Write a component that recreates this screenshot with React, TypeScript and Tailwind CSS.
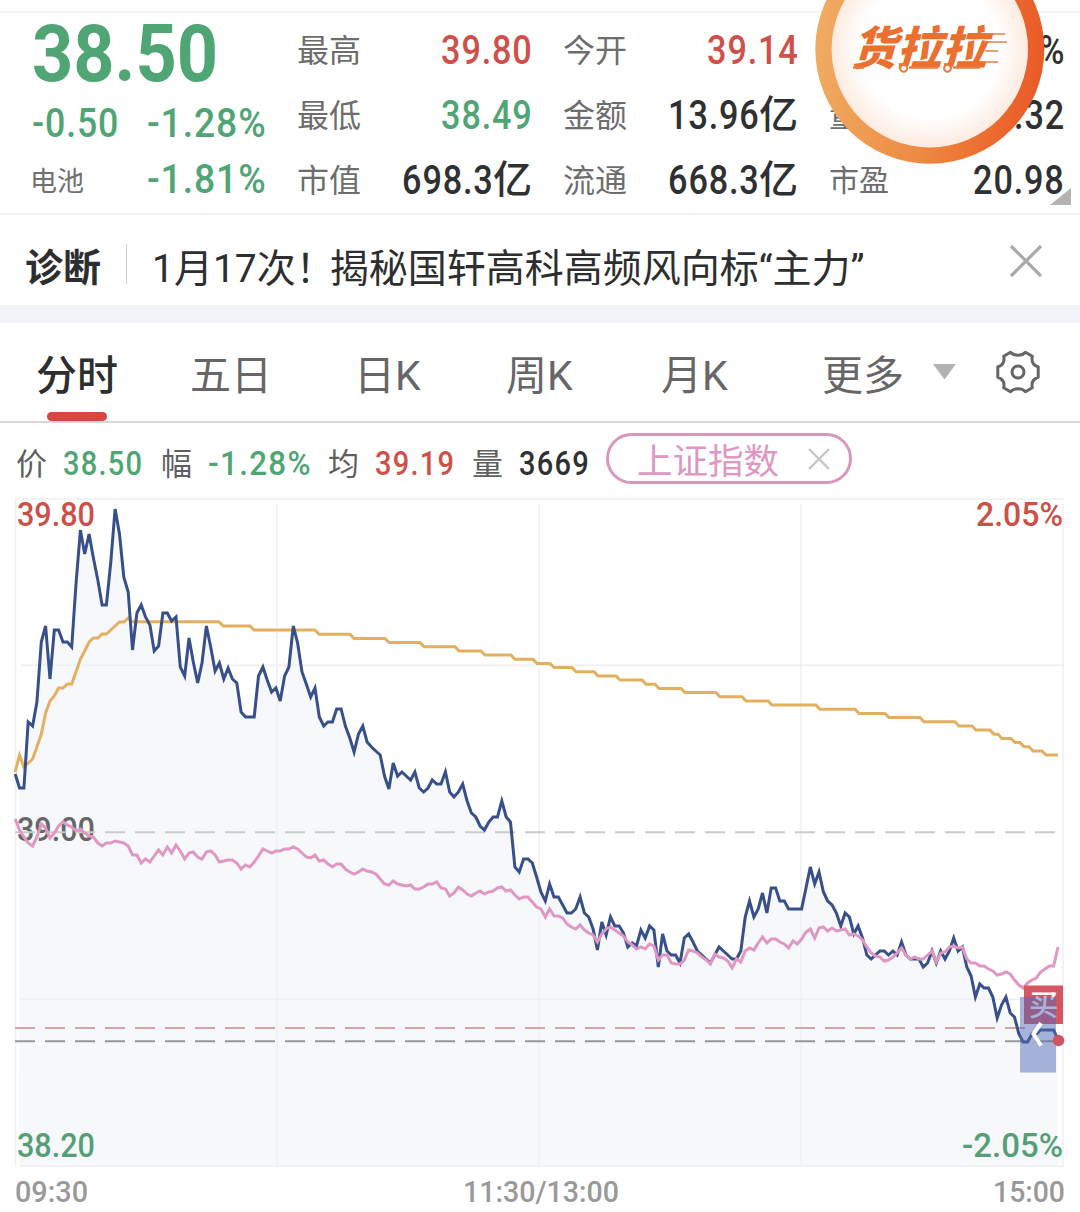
import React from 'react';
import clsx from 'clsx';

const UP = 'text-[#cf5048]';
const DOWN = 'text-[#4fa573]';
const INK = 'text-[#2f3032]';

const QUOTE_COLUMNS = [
  [
    { label: '最高', value: '39.80', tone: UP },
    { label: '最低', value: '38.49', tone: DOWN },
    { label: '市值', value: '698.3', unit: '亿', tone: INK },
  ],
  [
    { label: '今开', value: '39.14', tone: UP },
    { label: '金额', value: '13.96', unit: '亿', tone: INK },
    { label: '流通', value: '668.3', unit: '亿', tone: INK },
  ],
  [
    { label: '', value: '%', tone: INK },
    { label: '量比', value: '.32', tone: INK },
    { label: '市盈', value: '20.98', tone: INK, small: true },
  ],
];

const TABS = [
  { label: '分时', width: 'w-[154px]', active: true },
  { label: '五日', width: 'w-[164px]' },
  { label: '日K', width: 'w-[152px]' },
  { label: '周K', width: 'w-[155px]' },
  { label: '月K', width: 'w-[161px]' },
];

const SUMMARY = [
  { label: '价', value: '38.50', width: 'w-[145px]', scale: 'scale-x-[.88]', tone: DOWN },
  { label: '幅', value: '-1.28%', width: 'w-[167px]', scale: 'scale-x-[.95]', tone: DOWN },
  { label: '均', value: '39.19', width: 'w-[144px]', scale: 'scale-x-[.88]', tone: UP },
  { label: '量', value: '3669', width: 'w-[134px]', scale: 'scale-x-[.88]', tone: INK },
];

// one sample per minute, already in chart units
const PRICE = [
  774, 788, 788, 722, 726, 702, 642, 626, 679, 630, 630, 642, 642, 647, 584, 530, 554, 534, 558, 580,
  605, 605, 562, 509, 534, 577, 592, 650, 613, 605, 617, 625, 651, 646, 613, 613, 621, 617, 667, 676,
  638, 662, 683, 663, 626, 647, 671, 663, 679, 668, 679, 683, 712, 717, 717, 717, 676, 667, 680, 692,
  688, 701, 676, 667, 626, 643, 672, 684, 697, 688, 717, 726, 722, 722, 709, 709, 726, 738, 752, 734,
  726, 742, 747, 751, 755, 776, 789, 763, 776, 772, 776, 780, 772, 788, 792, 788, 780, 784, 784, 772,
  792, 797, 792, 784, 801, 813, 817, 826, 830, 822, 817, 817, 801, 817, 822, 867, 872, 859, 859, 863,
  877, 892, 901, 884, 897, 897, 905, 913, 913, 909, 897, 913, 917, 929, 950, 922, 935, 917, 926, 926,
  933, 947, 943, 946, 930, 938, 926, 930, 967, 934, 951, 955, 955, 963, 938, 934, 942, 951, 955, 959,
  963, 955, 947, 951, 955, 959, 959, 951, 917, 901, 917, 909, 893, 913, 888, 888, 901, 901, 909, 909,
  909, 909, 888, 867, 884, 872, 892, 901, 905, 913, 926, 913, 917, 934, 926, 938, 955, 959, 955, 951,
  951, 955, 951, 955, 942, 955, 959, 959, 959, 967, 963, 951, 963, 951, 959, 951, 938, 951, 947, 967,
  976, 997, 984, 988, 988, 997, 1018, 1005, 997, 1013, 1017, 1034, 1042, 1042, 1034, 1034, 1030, 1030, 1030, 1030,
  1040,
];

const INDEX = [
  819, 830, 837, 843, 846, 837, 824, 828, 838, 833, 826, 822, 825, 827, 831, 829, 833, 836, 837, 843,
  846, 843, 843, 841, 842, 843, 846, 855, 855, 863, 859, 862, 856, 850, 855, 847, 853, 845, 851, 859,
  853, 852, 857, 859, 852, 851, 855, 862, 861, 860, 860, 863, 869, 865, 867, 862, 856, 849, 851, 853,
  851, 851, 849, 849, 847, 849, 853, 857, 858, 855, 861, 860, 864, 867, 864, 864, 869, 872, 874, 872,
  869, 871, 872, 874, 879, 884, 885, 881, 884, 885, 886, 885, 889, 889, 887, 884, 884, 882, 888, 889,
  896, 893, 887, 890, 894, 896, 893, 891, 894, 892, 891, 888, 887, 891, 890, 895, 899, 897, 897, 902,
  907, 909, 917, 909, 916, 916, 918, 924, 927, 929, 925, 930, 933, 935, 942, 934, 929, 927, 930, 933,
  936, 942, 945, 949, 947, 949, 944, 946, 960, 955, 955, 963, 964, 964, 960, 950, 951, 953, 957, 960,
  964, 954, 957, 958, 961, 968, 959, 962, 951, 948, 950, 943, 937, 943, 939, 939, 942, 944, 948, 941,
  944, 939, 932, 929, 938, 928, 927, 931, 928, 931, 930, 929, 935, 934, 936, 940, 947, 953, 956, 957,
  961, 960, 957, 953, 948, 955, 959, 957, 959, 959, 955, 951, 962, 953, 952, 947, 946, 948, 947, 959,
  963, 963, 966, 966, 969, 971, 975, 974, 972, 974, 980, 985, 988, 983, 980, 978, 972, 969, 966, 966,
  947,
];

const AVERAGE_OPEN = [
  772, 755, 767, 763, 759, 747, 734, 713, 701, 696, 688, 688, 684, 684, 672, 659, 651, 642, 638, 638,
  634, 634, 630, 626, 622, 622, 618,
];

// the average only moves in whole cents: x where each level ends
const AVERAGE_STEPS = [
  219, 250, 315, 350, 385, 420, 455, 481, 511, 533, 550, 572, 594, 616, 642, 655, 681, 716, 742, 768,
  816, 855, 885, 920, 955, 972, 990, 998, 1011, 1020, 1029, 1042, 1058,
];

const toPoints = (ys: number[], from = 0) =>
  ys.slice(from).map((y, i) => `${(15.2 + (i + from) * 4.345).toFixed(1)},${y}`).join(' ');

const averagePoints = () => {
  const pts = [toPoints(AVERAGE_OPEN)];
  let x = 132;
  AVERAGE_STEPS.forEach((end, i) => {
    const y = (621.7 + i * 4.17).toFixed(1);
    pts.push(`${x},${y} ${end},${y}`);
    x = end + 4;
  });
  return pts.join(' ');
};

const Chart: React.FC = () => (
  <svg width="1080" height="720" viewBox="0 492 1080 720" className="block" fontFamily='Roboto, "Noto Sans CJK SC", sans-serif'>
    <polygon points={`19,1166 ${toPoints(PRICE, 1)} 1058,1166`} fill="#f6f8fc" />

    {/* grid */}
    <g stroke="#eff0f3" strokeWidth="1.6">
      <path d="M15 499H1064M21 665.3H1064M21 999.2H1064M21 1166H1064" />
      <path d="M15.5 499V1166M277 504V1166M539 504V1166M801 504V1166M1063 504V1166" />
    </g>

    <g fontSize="33" fontWeight="500">
      <text x="17" y="525.5" textLength="78" lengthAdjust="spacingAndGlyphs" fill="#cc5048">39.80</text>
      <text x="976" y="525.5" textLength="87" lengthAdjust="spacingAndGlyphs" fill="#cc5048">2.05%</text>
      <text x="17" y="840.5" textLength="78" lengthAdjust="spacingAndGlyphs" fill="#666">39.00</text>
      <text x="17" y="1156.5" textLength="78" lengthAdjust="spacingAndGlyphs" fill="#559f75">38.20</text>
      <text x="962" y="1156.5" textLength="101" lengthAdjust="spacingAndGlyphs" fill="#559f75">-2.05%</text>
    </g>

    <g fill="none" strokeWidth="2" strokeDasharray="20 10">
      <path d="M15 832.3H1056" stroke="#c9cacc" />
      <path d="M15 1028H1025" stroke="#d3a5a3" />
      <path d="M15 1041.3H1058" stroke="#96979b" />
    </g>

    <g fill="none" strokeWidth="3">
      <polyline points={averagePoints()} stroke="#e4b05f" />
      <polyline points={toPoints(PRICE)} stroke="#37508a" />
      <polyline points={toPoints(INDEX)} stroke="#e097c2" />
    </g>

    {/* buy marker */}
    <rect x="1024" y="985.5" width="39" height="38.5" fill="#d45663" />
    <text x="1029" y="1016" fontSize="29" fontWeight="500" fill="#fff">买</text>
    <rect x="1020" y="997" width="36" height="75.5" fill="#5169b5" fillOpacity="0.5" />
    <path d="M1041 1023L1033.5 1034L1041 1045.5" fill="none" stroke="#fff" strokeWidth="4" />
    <circle cx="1058.5" cy="1040.5" r="5.8" fill="#d15463" />

    <g fontSize="29.5" fontWeight="500" fill="#999">
      <text x="15" y="1202" textLength="73" lengthAdjust="spacingAndGlyphs">09:30</text>
      <text x="463" y="1202" textLength="156" lengthAdjust="spacingAndGlyphs">11:30/13:00</text>
      <text x="993" y="1202" textLength="72" lengthAdjust="spacingAndGlyphs">15:00</text>
    </g>
  </svg>
);

const Sponsor: React.FC = () => (
  <svg width="232" height="168" viewBox="814 0 232 168" className="absolute left-[814px] top-0">
    <defs>
      <linearGradient id="ring" x1="0" x2="1" y1="0.4" y2="0.5">
        <stop offset="0" stopColor="#f0ac63" />
        <stop offset="0.5" stopColor="#ee8a42" />
        <stop offset="0.8" stopColor="#ec6c2f" />
        <stop offset="1" stopColor="#e95a28" />
      </linearGradient>
      <radialGradient id="face">
        <stop offset="0.7" stopColor="#fff" />
        <stop offset="1" stopColor="#fdebe0" />
      </radialGradient>
    </defs>
    <circle cx="929.8" cy="49.2" r="114.5" fill="url(#ring)" />
    <circle cx="929.8" cy="49.2" r="98.2" fill="url(#face)" />
    <text
      transform="translate(851 64.5) skewX(-16)"
      fontFamily='"Noto Sans CJK SC", sans-serif'
      fontSize="46"
      fontWeight="900"
      textLength="135"
      lengthAdjust="spacingAndGlyphs"
      fill="#ea7030"
    >
      货拉拉
    </text>
    <g fill="none" stroke="#ea7c40">
      <path d="M986 34H1005M984 42H1007M985 51H998M980 62H998" strokeWidth="1.5" />
      <path d="M853 67.5H864M909 67.5H938M953 67.5H980" strokeWidth="2.6" />
      <circle cx="903.7" cy="68.3" r="3.4" strokeWidth="2" fill="#fff" />
      <circle cx="947.5" cy="68.3" r="3.4" strokeWidth="2" fill="#fff" />
    </g>
  </svg>
);

const Quote: React.FC = () => (
  <section className="relative h-[215px] border-b-2 border-[#f4f4f5] pt-[11px]">
    <div className="flex h-[202px] border-t-2 border-[#f4f4f5]">
      <div className={clsx('w-[297px] pl-8', DOWN)}>
        <div className="h-[78px] pt-px text-[80px] font-bold leading-[80px]">
          <span className="inline-block origin-left scale-x-[.9]">38.50</span>
        </div>
        <div className="flex h-[65px] items-center text-[41px] font-medium leading-none">
          <span className="w-[115px]">
            <span className="inline-block origin-left scale-x-[.87] tracking-[1px]">-0.50</span>
          </span>
          <span className="inline-block origin-left scale-x-[.91] tracking-[1px]">-1.28%</span>
        </div>
        <div className="flex h-[46px] items-center text-[41px] font-medium leading-none">
          <span className="-ml-0.5 mr-0.5 w-[115px] pt-1.5 text-[27px] font-normal text-[#707070]">电池</span>
          <span className="inline-block origin-left scale-x-[.91] tracking-[1px]">-1.81%</span>
        </div>
      </div>
      <div className="flex gap-[31px]">
        {QUOTE_COLUMNS.map((rows, i) => (
          <div key={i} className="w-[235px] pt-[5px]">
            {rows.map((row) => (
              <div key={row.value} className="flex h-[65px] items-center leading-none">
                <span className={clsx('mr-auto text-[#6d6d6d]', row.small ? 'text-[30px]' : 'text-[32px]')}>{row.label}</span>
                <span className={clsx('-mr-px inline-block origin-right scale-x-[.835] text-[41px] font-medium tracking-[1px]', row.tone)}>
                  {row.value}
                </span>
                {row.unit && <span className={clsx('text-[39px] font-medium', row.tone)}>{row.unit}</span>}
              </div>
            ))}
          </div>
        ))}
      </div>
    </div>
    <svg width="21" height="17" viewBox="0 0 21 17" className="absolute left-[1050px] top-[188px]">
      <path d="M21 0V17H0Z" fill="#b3b3b3" />
    </svg>
    <Sponsor />
  </section>
);

const App: React.FC = () => {
  return (
    <div className="h-[1212px] w-[1080px] overflow-hidden whitespace-nowrap bg-white font-[Roboto,'Noto_Sans_CJK_SC',sans-serif]">
      <Quote />

      {/* diagnosis banner */}
      <div className="flex h-[90px] items-center pl-[25px] pr-[38px] leading-none text-[#2d2e30]">
        <span className="pt-4 text-[38px] font-bold">诊断</span>
        <span className="ml-[25px] mt-2 h-10 w-px bg-[#d0d0d0]" />
        <span className="ml-[25px] pt-[18px] text-[39px]">
          <span className="-mr-[5px]">1月17次！</span>揭秘国轩高科高频风向标“主力”
        </span>
        <svg width="32" height="32" viewBox="0 0 32 32" className="ml-auto mt-0.5">
          <path d="M1 1L31 31M31 1L1 31" stroke="#a9a9a9" strokeWidth="3.2" />
        </svg>
      </div>
      <div className="h-[18px] bg-[#f3f4f9]" />

      {/* chart tabs */}
      <nav className="flex h-[100px] border-b-2 border-[#d9d9d9] pl-9 text-[41px] leading-none text-[#666]">
        {TABS.map((tab) => (
          <div key={tab.label} className={clsx('flex flex-col', tab.width)}>
            <span className={clsx('h-[89px] pt-[33px]', tab.active && 'font-medium text-[#2d2e30]')}>{tab.label}</span>
            {tab.active && <span className="ml-[11px] h-[9px] w-[60px] rounded-full bg-[#d5473f]" />}
          </div>
        ))}
        <span className="w-[111px] pt-[33px]">更多</span>
        <svg width="23" height="16" viewBox="0 0 23 16" className="mt-[41px]">
          <path d="M0 0H23L11.5 15.5Z" fill="#b2b2b2" />
        </svg>
        <svg width="44" height="44" viewBox="-22 -22 44 44" className="ml-[40px] mt-[27px]" fill="none" stroke="#666" strokeWidth="3">
          <path
            strokeLinejoin="round"
            d="M-7.5 -19.8C-4 -15.8 4 -15.8 7.5 -19.8L14.3 -15.8C13.2 -10.5 15 -6.8 20.2 -5.2V5.2C15 6.8 13.2 10.5 14.3 15.8L7.5 19.8C4 15.8 -4 15.8 -7.5 19.8L-14.3 15.8C-13.2 10.5 -15 6.8 -20.2 5.2V-5.2C-15 -6.8 -13.2 -10.5 -14.3 -15.8Z"
          />
          <circle r="6" />
        </svg>
      </nav>

      {/* latest values */}
      <div className="flex h-[69px] items-start pl-4 leading-none">
        {SUMMARY.map((item) => (
          <div key={item.label} className={clsx('flex h-20 items-center', item.width)}>
            <span className="w-[47px] pt-0.5 text-[31px] text-[#5f5f5f]">{item.label}</span>
            <span className={clsx('inline-block origin-left text-[33px] font-medium tracking-[1.4px]', item.scale, item.tone)}>
              {item.value}
            </span>
          </div>
        ))}
        <div className="mt-[10px] flex h-[51px] w-[246px] items-center rounded-full border-3 border-[#d998ba] pl-7">
          <span className="pt-2 text-[35.5px] text-[#e097c2]">上证指数</span>
          <svg width="22" height="22" viewBox="0 0 22 22" className="ml-[29px]">
            <path d="M1 1L21 21M21 1L1 21" stroke="#c6c6c6" strokeWidth="2.4" />
          </svg>
        </div>
      </div>

      <Chart />
    </div>
  );
};

export default App;
